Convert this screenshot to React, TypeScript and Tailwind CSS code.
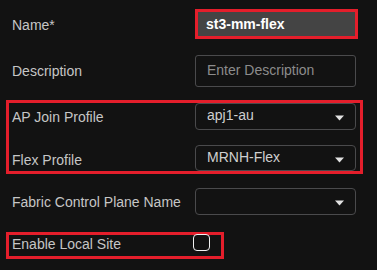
import React from "react"

function Caret() {
  return (
    <svg width="9" height="6" viewBox="0 0 9 6" className="mt-[3px] shrink-0">
      <path d="M0 0.5h9L4.5 5.5z" fill="#e2e2e2" />
    </svg>
  )
}

function Select({ value, h }: { value?: string; h: string }) {
  return (
    <div
      className={`flex w-[161px] ${h} items-center justify-between rounded-[4px] border border-[#4a4a4c] pl-[11px] pr-[11px]`}
    >
      <span className="mb-[3px] text-[#cfcfcf]">{value}</span>
      <Caret />
    </div>
  )
}

export default function App() {
  return (
    <div className="h-[270px] w-[377px] overflow-hidden bg-[#121212] pt-[9px] font-['Liberation_Sans',Arial,sans-serif] text-[14px] leading-[16px] text-[#c6c6c6]">
      {/* Name */}
      <div className="flex items-start">
        <div className="mt-[8px] w-[195px] shrink-0 pl-[12px]">Name*</div>
        <div className="flex h-[30px] w-[163px] items-center border-[3px] border-[#e41e2b] bg-[#444444] pb-[1px] pl-[8px] font-bold text-white">
          st3-mm-flex
        </div>
      </div>

      {/* Description */}
      <div className="mt-[16px] flex items-start">
        <div className="mt-[8px] w-[195px] shrink-0 pl-[12px]">Description</div>
        <div className="flex h-[32px] w-[161px] items-center rounded-[3px] border border-[#4a4a4c] pb-[2px] pl-[11px] text-[#8c8c8c]">
          Enter Description
        </div>
      </div>

      {/* AP Join / Flex */}
      <div className="ml-[6px] mt-[13px] flex w-[357px] flex-col border-[3px] border-[#e41e2b]">
        <div className="flex items-start">
          <div className="mt-[6px] w-[186px] shrink-0 pl-[3px]">AP Join Profile</div>
          <Select value="apj1-au" h="h-[27px]" />
        </div>
        <div className="mt-[15px] flex items-start">
          <div className="mt-[7px] w-[186px] shrink-0 pl-[3px]">Flex Profile</div>
          <Select value="MRNH-Flex" h="h-[26px]" />
        </div>
      </div>

      {/* Fabric */}
      <div className="mt-[14px] flex items-start">
        <div className="mt-[6px] w-[195px] shrink-0 pl-[12px]">Fabric Control Plane Name</div>
        <Select h="h-[27px]" />
      </div>

      {/* Enable Local Site */}
      <div className="ml-[6px] mt-[17px] flex h-[27px] w-[218px] items-start border-[3px] border-[#e41e2b]">
        <div className="mt-[1px] w-[184px] shrink-0 pl-[3px]">Enable Local Site</div>
        <div className="mt-[-1px] h-[17px] w-[17px] rounded-[4px] border-[1.5px] border-[#f2f2f2]" />
      </div>
    </div>
  )
}
